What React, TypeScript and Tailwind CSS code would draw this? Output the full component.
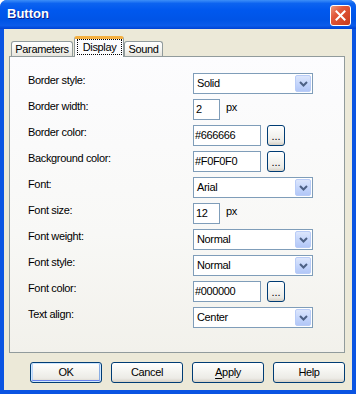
import React from "react";

type Row = { label: string; type: "select" | "num" | "color"; value: string };

const rows: Row[] = [
  { label: "Border style:", type: "select", value: "Solid" },
  { label: "Border width:", type: "num", value: "2" },
  { label: "Border color:", type: "color", value: "#666666" },
  { label: "Background color:", type: "color", value: "#F0F0F0" },
  { label: "Font:", type: "select", value: "Arial" },
  { label: "Font size:", type: "num", value: "12" },
  { label: "Font weight:", type: "select", value: "Normal" },
  { label: "Font style:", type: "select", value: "Normal" },
  { label: "Font color:", type: "color", value: "#000000" },
  { label: "Text align:", type: "select", value: "Center" },
];

function Select({ value }: { value: string }) {
  return (
    <div className="flex h-[21px] w-[120px] items-stretch border border-[#7F9DB9] bg-white">
      <div className="flex flex-1 items-center pl-[3px] leading-[13px]">{value}</div>
      <div className="my-[1px] mr-[1px] flex w-[16px] items-center justify-center rounded-[2px] border border-[#B9CCF7] bg-[linear-gradient(to_bottom,#DCE6FC,#C1D3FB_60%,#B2C7F7)]">
        <svg width="9" height="6" viewBox="0 0 9 6">
          <polyline points="1,1 4.5,4.5 8,1" fill="none" stroke="#4D6185" strokeWidth="2" />
        </svg>
      </div>
    </div>
  );
}

function XpButton({ children, def, w, h }: { children: React.ReactNode; def?: boolean; w: string; h: string }) {
  return (
    <div
      className={`${w} ${h} flex items-center justify-center rounded-[3px] border border-[#003C74] bg-[linear-gradient(to_bottom,#FFFFFF,#F4F4F0_45%,#ECEBE6_80%,#D6D0C5)] leading-[13px] ${
        def ? "shadow-[inset_0_0_0_1px_#CEE7FF,inset_0_-2px_0_0_#6982EE,inset_2px_0_0_0_#B8D4FA,inset_-2px_0_0_0_#89ADE4]" : ""
      }`}
    >
      {children}
    </div>
  );
}

export default function App() {
  return (
    <div className="h-[394px] w-[356px] overflow-hidden rounded-t-[7px] bg-[#0A54E2] font-['Liberation_Sans',Arial,sans-serif] text-[11px] tracking-[-0.35px] text-black">
      {/* Title bar */}
      <div className="flex h-[29px] items-start justify-between bg-[linear-gradient(to_bottom,#3D8FF8_0%,#0C63F0_12%,#0058EE_35%,#0054E6_70%,#0A5BEA_88%,#0042D4_100%)] pl-[7px] pr-[5px]">
        <div className="pt-[6px] font-['Liberation_Sans',Arial,sans-serif] text-[13px] font-bold leading-[16px] tracking-[0px] text-white [text-shadow:1px_1px_#0F1E89]">
          Button
        </div>
        <div className="mt-[5px] flex h-[21px] w-[21px] items-center justify-center rounded-[3px] border border-white bg-[linear-gradient(135deg,#EC9A7E_0%,#E2583A_35%,#C93A1A_100%)]">
          <svg width="11" height="11" viewBox="0 0 11 11">
            <line x1="1.5" y1="1.5" x2="9.5" y2="9.5" stroke="white" strokeWidth="2" strokeLinecap="square" />
            <line x1="9.5" y1="1.5" x2="1.5" y2="9.5" stroke="white" strokeWidth="2" strokeLinecap="square" />
          </svg>
        </div>
      </div>

      {/* Client area */}
      <div className="mx-[4px] flex h-[361px] flex-col bg-[#ECE9D8]">
        {/* Tabs */}
        <div className="mt-[7px] flex h-[20px] items-end">
          <div className="ml-[7px] flex h-[15px] w-[62px] items-center justify-center rounded-t-[3px] border border-b-0 border-[#919B9C] bg-[linear-gradient(to_bottom,#FFFFFF,#F3F3EF_60%,#E6E4DC)] leading-[13px]">
            Parameters
          </div>
          <div className="relative z-10 mb-[-1px] ml-[1px] flex h-[21px] w-[50px] flex-col items-center rounded-t-[3px] border border-b-0 border-t-[3px] border-[#919B9C] border-t-[#F5B040] bg-[#FCFCFE]">
            <div className="ml-[1px] flex h-[16px] w-[45px] items-center justify-center border border-dotted border-black leading-[13px]">
              Display
            </div>
          </div>
          <div className="flex h-[15px] w-[39px] items-center justify-center rounded-t-[3px] border border-b-0 border-[#919B9C] bg-[linear-gradient(to_bottom,#FFFFFF,#F3F3EF_60%,#E6E4DC)] leading-[13px]">
            Sound
          </div>
        </div>

        {/* Panel */}
        <div className="ml-[5px] flex h-[297px] w-[336px] flex-col gap-[5px] border border-[#919B9C] bg-[linear-gradient(to_bottom,#FCFCFE,#F8F8F6_60%,#F2F1EB)] pl-[18px] pt-[16px]">
          {rows.map((r) => (
            <div key={r.label} className="flex h-[21px] items-start">
              <div className="w-[165px] pt-[1px] leading-[13px]">{r.label}</div>
              {r.type === "select" && <Select value={r.value} />}
              {r.type === "num" && (
                <>
                  <div className="flex h-[21px] w-[27px] items-center border border-[#7F9DB9] bg-white pl-[2px] leading-[13px]">
                    {r.value}
                  </div>
                  <div className="ml-[6px] pt-[2px] leading-[13px]">px</div>
                </>
              )}
              {r.type === "color" && (
                <>
                  <div className="flex h-[21px] w-[68px] items-center border border-[#7F9DB9] bg-white pl-[1px] leading-[13px]">
                    {r.value}
                  </div>
                  <div className="ml-[6px]">
                    <XpButton w="w-[18px]" h="h-[21px]">
                      <span className="pt-[2px] tracking-[0px]">...</span>
                    </XpButton>
                  </div>
                </>
              )}
            </div>
          ))}
        </div>

        {/* Buttons */}
        <div className="ml-[26px] mt-[9px] flex gap-[9px]">
          <XpButton def w="w-[72px]" h="h-[21px]">OK</XpButton>
          <XpButton w="w-[72px]" h="h-[21px]">Cancel</XpButton>
          <XpButton w="w-[72px]" h="h-[21px]">
            <span>
              <span className="underline underline-offset-[2px]">A</span>pply
            </span>
          </XpButton>
          <XpButton w="w-[72px]" h="h-[21px]">Help</XpButton>
        </div>
      </div>
    </div>
  );
}
